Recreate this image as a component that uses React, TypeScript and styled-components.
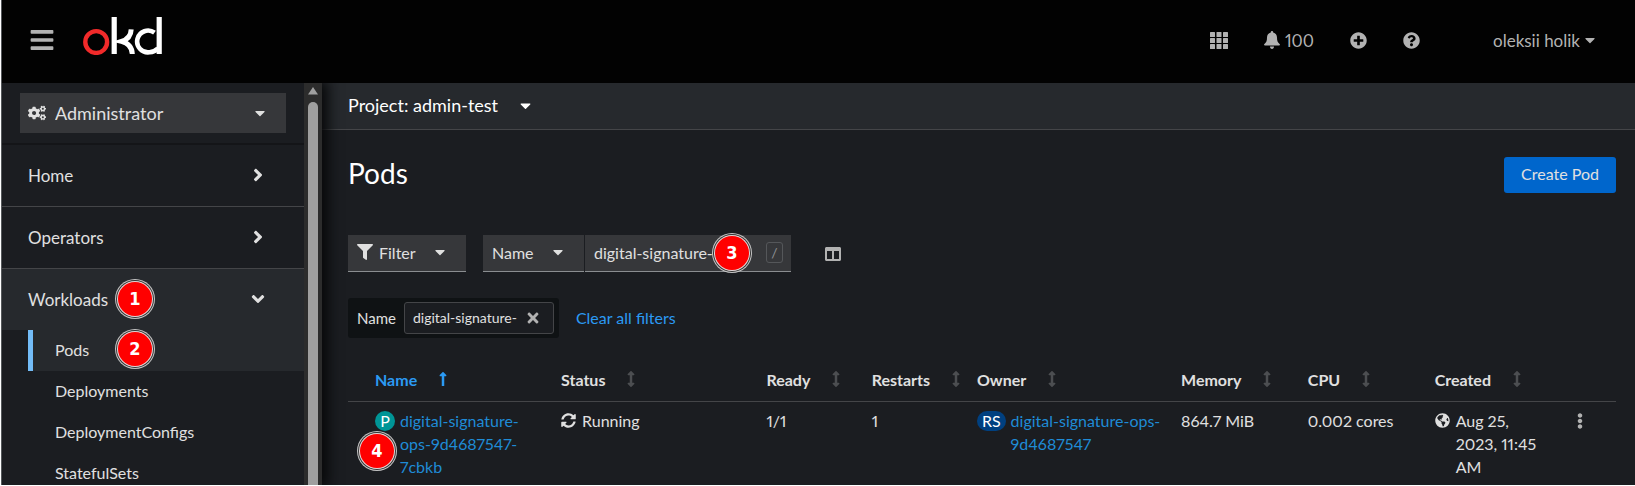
import React, { useState } from 'react';
import styled, { createGlobalStyle } from 'styled-components';
import {
  FaAngleDown,
  FaAngleRight,
  FaArrowsAltV,
  FaBars,
  FaCaretDown,
  FaCogs,
  FaColumns,
  FaEllipsisV,
  FaFilter,
  FaGlobeAmericas,
  FaLongArrowAltUp,
  FaPlusCircle,
  FaQuestionCircle,
  FaSyncAlt,
  FaTimes,
} from 'react-icons/fa';

const color = {
  page: '#1b1d21',
  raised: '#26292d',
  control: '#36373a',
  chipGroup: '#0f1214',
  line: '#444548',
  text: '#e0e0e0',
  muted: '#b2b2b2',
  link: '#2b9af3',
  linkDim: '#1f8bd6',
};

const GlobalStyle = createGlobalStyle`
  *, *::before, *::after { box-sizing: border-box; }
  body {
    margin: 0;
    background: #fff;
    color: ${color.text};
    font: 16px/23px Lato, "Open Sans", sans-serif;
    font-variant-numeric: proportional-nums;
  }
  button, input, select { font: inherit; color: inherit; border: 0; margin: 0; padding: 0; background: none; }
  button { cursor: pointer; }
  a { color: inherit; text-decoration: none; }
  ul { list-style: none; margin: 0; padding: 0; }
  svg { display: block; flex: none; }
`;

const Shell = styled.div`
  display: flex;
  flex-direction: column;
  height: calc(100vh - 1px);
  margin-left: 1px;
  border-left: 1px solid #55585b;
  background: ${color.page};
  overflow: hidden;
`;

const Masthead = styled.header`
  display: flex;
  align-items: center;
  flex: none;
  height: 83px;
  padding: 0 37px 3px 27px;
  background: #020202;
  color: ${color.muted};
  font-size: 17px;
`;

const Logo = styled.a`
  margin: 0 auto 8px 28px;
`;

const MastheadTools = styled.div`
  display: flex;
  align-items: center;
  gap: 36px;
`;

const IconButton = styled.button`
  display: flex;
  align-items: center;
  gap: 5px;
`;

const UserButton = styled(IconButton)`
  gap: 2px;
  margin-left: 37px;
`;

const Body = styled.div`
  display: flex;
  flex: 1;
  min-height: 0;
`;

const Sidebar = styled.aside`
  display: flex;
  flex: none;
  width: 320px;
  z-index: 1;
  box-shadow: 4px 0 12px 2px #08090a;
  clip-path: inset(0 -24px 0 0);
`;

const SidebarContent = styled.div`
  flex: 1;
  overflow: hidden;
`;

const ScrollTrack = styled.div`
  display: flex;
  flex-direction: column;
  align-items: center;
  width: 18px;
  padding-top: 4px;
  gap: 7px;
  background: #2c2c2c;
`;

const ScrollThumb = styled.div`
  flex: 1;
  width: 10px;
  border-radius: 5px 5px 0 0;
  background: #9f9f9f;
`;

const Perspective = styled.div`
  padding: 10px 18px;
  border-bottom: 2px solid #141518;
`;

const PerspectiveSelect = styled.label`
  display: flex;
  align-items: center;
  gap: 9px;
  height: 40px;
  padding: 0 18px 0 8px;
  background: ${color.control};
  font-size: 18px;
`;

const PlainSelect = styled.select`
  flex: 1;
  min-width: 0;
  appearance: none;
  outline: 0;
`;

const NavToggle = styled.button<{ $open?: boolean }>`
  display: flex;
  align-items: center;
  justify-content: space-between;
  width: 100%;
  height: ${(p) => (p.$open ? 61 : 62)}px;
  padding: 0 36px 1px 26px;
  border-bottom: ${(p) => (p.$open ? 0 : 1)}px solid ${color.line};
  background: ${(p) => (p.$open ? color.raised : 'transparent')};
  font-size: 17px;
`;

const NavSection = styled.li`
  position: relative;
`;

const ChevronBox = styled.span`
  display: flex;
  justify-content: center;
  width: 20px;
`;

const SubNav = styled.ul`
  margin-left: 26px;
`;

const SubNavItem = styled.li`
  position: relative;
`;

const SubNavLink = styled.a<{ $current?: boolean }>`
  display: flex;
  align-items: center;
  height: 41px;
  padding: 0 0 3px 22px;
  border-left: 5px solid ${(p) => (p.$current ? '#73bcf7' : 'transparent')};
  background: ${(p) => (p.$current ? color.raised : 'transparent')};
`;

const Marker = styled.span<{ $left: number; $top: number }>`
  position: absolute;
  z-index: 2;
  left: ${(p) => p.$left}px;
  top: ${(p) => p.$top}px;
  display: flex;
  align-items: center;
  justify-content: center;
  width: 34px;
  height: 34px;
  border-radius: 50%;
  background: #f00;
  box-shadow: 0 0 0 1px #e6d8d8, 0 0 0 2px #333, 0 0 0 3px #c4c4c4;
  color: #fff;
  font: bold 18px/20px "DejaVu Sans Condensed", "DejaVu Sans", sans-serif;
  pointer-events: none;
`;

const Main = styled.main`
  flex: 1;
  min-width: 0;
`;

const ProjectBar = styled.div`
  display: flex;
  align-items: center;
  height: 47px;
  padding: 0 0 2px 26px;
  border-bottom: 1px solid ${color.line};
  background: ${color.raised};
`;

const ProjectButton = styled.button`
  display: flex;
  align-items: center;
  gap: 19px;
  color: #fff;
  font-size: 18px;
`;

const Content = styled.div`
  padding: 27px 19px 0 26px;
`;

const TitleRow = styled.div`
  display: flex;
  align-items: flex-start;
  justify-content: space-between;
`;

const Title = styled.h1`
  margin: 0;
  color: #fff;
  font-size: 28px;
  line-height: 32px;
  font-weight: 400;
`;

const PrimaryButton = styled.button`
  height: 36px;
  padding: 0 17px 3px;
  border-radius: 3px;
  background: #06c;
`;

const Toolbar = styled.div`
  display: flex;
  align-items: center;
  margin-top: 42px;
`;

const FilterButton = styled.button`
  display: flex;
  align-items: center;
  gap: 6px;
  width: 118px;
  height: 37px;
  margin-right: 17px;
  padding: 0 18px 2px 9px;
  border-bottom: 1px solid #8a8d90;
  background: ${color.control};

  svg:last-child {
    margin-left: auto;
  }
`;

const AttributeSelect = styled.label`
  display: flex;
  align-items: center;
  width: 101px;
  height: 37px;
  margin-right: 1px;
  padding: 0 18px 2px 9px;
  border-bottom: 1px solid #8a8d90;
  background: ${color.control};
`;

const SearchBox = styled.div`
  position: relative;
  display: flex;
  align-items: center;
  width: 206px;
  height: 37px;
  margin-right: 34px;
  padding: 0 8px 2px 9px;
  border-bottom: 1px solid #8a8d90;
  background: ${color.control};
`;

const SearchInput = styled.input`
  flex: 1;
  min-width: 0;
  outline: 0;
`;

const KeyHint = styled.kbd`
  width: 17px;
  height: 21px;
  border: 1px solid #55575a;
  border-radius: 3px;
  color: #8f9194;
  font: 14px/19px Lato, sans-serif;
  text-align: center;
`;

const FilterChips = styled.div`
  display: flex;
  align-items: center;
  gap: 17px;
  margin-top: 26px;
`;

const ChipGroup = styled.div`
  display: flex;
  align-items: center;
  gap: 8px;
  height: 40px;
  padding: 0 5px 0 9px;
  border-radius: 3px;
  background: ${color.chipGroup};
  font-size: 15px;
`;

const Chip = styled.span`
  display: flex;
  align-items: center;
  gap: 8px;
  height: 32px;
  padding: 0 12px 1px 8px;
  border: 1px solid ${color.line};
  border-radius: 3px;
  background: ${color.page};
  font-size: 14px;
`;

const LinkButton = styled.button`
  padding-bottom: 2px;
  color: ${color.link};
`;

const Table = styled.table`
  width: 100%;
  margin-top: 20px;
  border-collapse: collapse;
  table-layout: fixed;
`;

const Th = styled.th<{ $width: string }>`
  width: ${(p) => p.$width};
  height: 43px;
  padding: 0;
  border-bottom: 1px solid ${color.line};
  text-align: left;
  font-weight: 700;

  &:first-child {
    padding-left: 27px;
  }
`;

const SortButton = styled.button<{ $active?: boolean }>`
  display: flex;
  align-items: center;
  gap: 18px;
  font-weight: 700;
  font-size: 16px;
  color: ${(p) => (p.$active ? color.link : color.text)};

  svg {
    color: ${(p) => (p.$active ? color.link : '#4c4e51')};
  }
`;

const Td = styled.td`
  padding: 7px 12px 0 0;
  vertical-align: top;

  &:first-child {
    padding-left: 27px;
  }
`;

const CreatedCell = styled(Td)`
  padding-right: 28px;
`;

const Resource = styled.div`
  position: relative;
  display: flex;
  align-items: flex-start;
  gap: 5px;
`;

const ResourceBadge = styled.span<{ $tone: string }>`
  flex: none;
  min-width: 20px;
  height: 20px;
  margin-top: 2px;
  padding: 0 5px;
  border-radius: 10px;
  background: ${(p) => p.$tone};
  color: #fff;
  line-height: 19px;
  text-align: center;
`;

const ResourceLink = styled.a`
  color: ${color.linkDim};
`;

const Inline = styled.div`
  display: flex;
  gap: 6px;

  svg {
    margin-top: 4px;
  }
`;

const BellIcon = () => (
  <svg width="16" height="18" viewBox="0 0 16 18" fill="currentColor" aria-hidden="true">
    <path d="M8 0c.8 0 1.2.6 1.2 1.4 2.4.6 3.8 2.500 3.800 5 0 3.300.7 4.900 2.600 6.500.6.6.4 1.600-.6 1.600H1c-1 0-1.200-1-.6-1.600C2.300 11.300 3 9.700 3 6.400c0-2.500 1.400-4.400 3.800-5C6.800.6 7.200 0 8 0z" />
    <path d="M6 15.500h4C10 17 9.200 18 8 18s-2-1-2-2.500z" />
  </svg>
);

const GridIcon = () => (
  <svg width="18" height="17" viewBox="0 0 18 17" fill="currentColor" aria-hidden="true">
    {[0, 6, 12].map((y) =>
      [0, 6.500, 13].map((x) => <rect key={`${x}-${y}`} x={x} y={y} width="5" height="5" rx=".5" />),
    )}
  </svg>
);

const OkdLogo = () => (
  <svg width="80" height="38" viewBox="0 0 80 38" fill="none" aria-hidden="true">
    <circle cx="13.200" cy="25" r="10.900" stroke="#f12a2a" strokeWidth="4.400" />
    <path d="M31.200 0v37" stroke="#fff" strokeWidth="5.200" />
    <path d="M48.200 12.300C48 18.500 44.500 22.500 38.500 24.400 45 26 49 30.500 49.300 37" stroke="#fff" strokeWidth="5" />
    <path d="M71.500 15.700A10.900 10.900 0 1 0 66.500 35.300C70 35 73 33.500 75 31.500" stroke="#fff" strokeWidth="4.600" />
    <path d="M76.200 0v37" stroke="#fff" strokeWidth="5.200" />
  </svg>
);

const ScrollArrow = () => (
  <svg width="10" height="8" viewBox="0 0 10 8" fill="#9f9f9f" aria-hidden="true">
    <path d="M5 0l5 7.500H0z" />
  </svg>
);

const columns = [
  { label: 'Name', width: '16.8%' },
  { label: 'Status', width: '16.2%' },
  { label: 'Ready', width: '8.3%' },
  { label: 'Restarts', width: '8.3%' },
  { label: 'Owner', width: '16.1%' },
  { label: 'Memory', width: '10%' },
  { label: 'CPU', width: '10%' },
  { label: 'Created', width: '10.8%' },
];

const workloads = ['Pods', 'Deployments', 'DeploymentConfigs', 'StatefulSets'];

export default function App() {
  const [query, setQuery] = useState('digital-signature-');

  return (
    <>
      <GlobalStyle />
      <Shell>
        <Masthead>
          <IconButton aria-label="Toggle navigation">
            <FaBars size={26} />
          </IconButton>
          <Logo href="#" aria-label="okd">
            <OkdLogo />
          </Logo>
          <MastheadTools>
            <IconButton aria-label="Applications">
              <GridIcon />
            </IconButton>
            <IconButton aria-label="Notifications">
              <BellIcon />
              100
            </IconButton>
            <IconButton aria-label="Import">
              <FaPlusCircle size={17} />
            </IconButton>
            <IconButton aria-label="Help">
              <FaQuestionCircle size={17} />
            </IconButton>
            <UserButton aria-haspopup="menu">
              oleksii holik
              <FaCaretDown size={16} />
            </UserButton>
          </MastheadTools>
        </Masthead>

        <Body>
          <Sidebar>
            <SidebarContent>
              <Perspective>
                <PerspectiveSelect>
                  <FaCogs size={18} />
                  <PlainSelect aria-label="Perspective">
                    <option>Administrator</option>
                  </PlainSelect>
                  <FaCaretDown size={16} />
                </PerspectiveSelect>
              </Perspective>
              <nav aria-label="Main">
                <ul>
                  <NavSection>
                    <NavToggle>
                      Home
                      <ChevronBox>
                        <FaAngleRight size={20} />
                      </ChevronBox>
                    </NavToggle>
                  </NavSection>
                  <NavSection>
                    <NavToggle>
                      Operators
                      <ChevronBox>
                        <FaAngleRight size={20} />
                      </ChevronBox>
                    </NavToggle>
                  </NavSection>
                  <NavSection>
                    <NavToggle $open aria-expanded="true">
                      Workloads
                      <ChevronBox>
                        <FaAngleDown size={20} />
                      </ChevronBox>
                    </NavToggle>
                    <Marker $left={116} $top={13}>1</Marker>
                    <SubNav>
                      {workloads.map((name, i) => (
                        <SubNavItem key={name}>
                          <SubNavLink href="#" $current={i === 0}>
                            {name}
                          </SubNavLink>
                          {i === 0 && <Marker $left={90} $top={2}>2</Marker>}
                        </SubNavItem>
                      ))}
                    </SubNav>
                  </NavSection>
                </ul>
              </nav>
            </SidebarContent>
            <ScrollTrack>
              <ScrollArrow />
              <ScrollThumb />
            </ScrollTrack>
          </Sidebar>

          <Main>
            <ProjectBar>
              <ProjectButton aria-haspopup="menu">
                Project: admin-test
                <FaCaretDown size={17} />
              </ProjectButton>
            </ProjectBar>
            <Content>
              <TitleRow>
                <Title>Pods</Title>
                <PrimaryButton>Create Pod</PrimaryButton>
              </TitleRow>

              <Toolbar>
                <FilterButton aria-haspopup="menu">
                  <FaFilter size={16} />
                  Filter
                  <FaCaretDown size={16} />
                </FilterButton>
                <AttributeSelect>
                  <PlainSelect aria-label="Filter attribute">
                    <option>Name</option>
                  </PlainSelect>
                  <FaCaretDown size={16} />
                </AttributeSelect>
                <SearchBox>
                  <SearchInput
                    aria-label="Search by name"
                    value={query}
                    onChange={(e) => setQuery(e.target.value)}
                  />
                  <KeyHint>/</KeyHint>
                  <Marker $left={130} $top={1}>3</Marker>
                </SearchBox>
                <IconButton aria-label="Manage columns">
                  <FaColumns size={16} color={color.muted} />
                </IconButton>
              </Toolbar>

              <FilterChips>
                <ChipGroup>
                  Name
                  <Chip>
                    digital-signature-
                    <IconButton aria-label="Remove filter">
                      <FaTimes size={16} color={color.muted} />
                    </IconButton>
                  </Chip>
                </ChipGroup>
                <LinkButton>Clear all filters</LinkButton>
              </FilterChips>

              <Table>
                <thead>
                  <tr>
                    {columns.map(({ label, width }, i) => (
                      <Th key={label} $width={width}>
                        <SortButton $active={i === 0}>
                          {label}
                          {i === 0 ? <FaLongArrowAltUp size={16} /> : <FaArrowsAltV size={16} />}
                        </SortButton>
                      </Th>
                    ))}
                    <Th $width="auto" aria-label="Actions" />
                  </tr>
                </thead>
                <tbody>
                  <tr>
                    <Td>
                      <Resource>
                        <ResourceBadge $tone="#009596">P</ResourceBadge>
                        <ResourceLink href="#">
                          digital-<wbr />signature-<wbr />ops-9d4687547-<wbr />7cbkb
                        </ResourceLink>
                        <Marker $left={-15} $top={25}>4</Marker>
                      </Resource>
                    </Td>
                    <Td>
                      <Inline>
                        <FaSyncAlt size={15} />
                        Running
                      </Inline>
                    </Td>
                    <Td>1/1</Td>
                    <Td>1</Td>
                    <Td>
                      <Resource>
                        <ResourceBadge $tone="#004080">RS</ResourceBadge>
                        <ResourceLink href="#">
                          digital-signature-ops-<wbr />9d4687547
                        </ResourceLink>
                      </Resource>
                    </Td>
                    <Td>864.7 MiB</Td>
                    <Td>0.002 cores</Td>
                    <CreatedCell>
                      <Inline>
                        <FaGlobeAmericas size={15} />
                        <span>Aug 25, 2023, 11:45 AM</span>
                      </Inline>
                    </CreatedCell>
                    <Td>
                      <Inline>
                        <IconButton aria-label="Pod actions">
                          <FaEllipsisV size={16} color={color.muted} />
                        </IconButton>
                      </Inline>
                    </Td>
                  </tr>
                </tbody>
              </Table>
            </Content>
          </Main>
        </Body>
      </Shell>
    </>
  );
}
